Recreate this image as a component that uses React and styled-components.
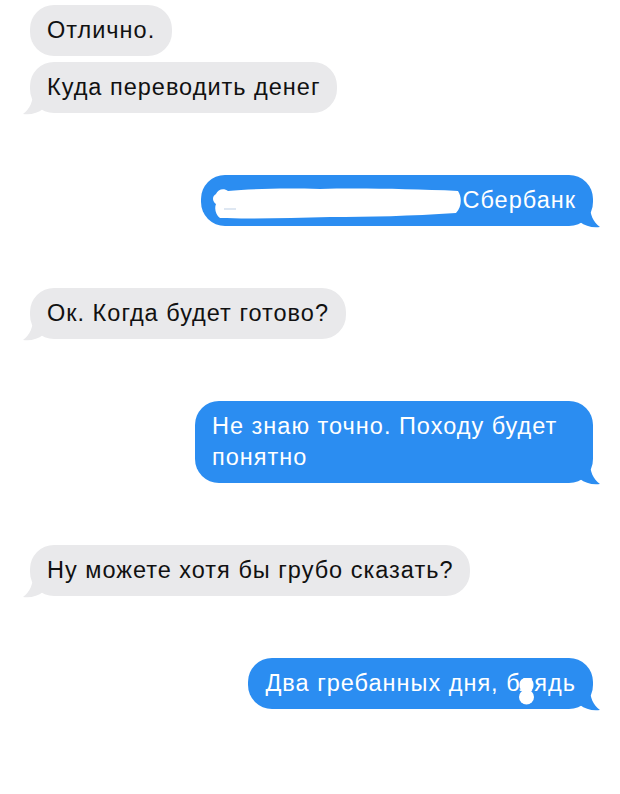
import React from 'react';
import styled, { createGlobalStyle } from 'styled-components';

const GlobalStyle = createGlobalStyle`
  html, body {
    margin: 0;
    padding: 0;
    background: #ffffff;
  }
  body {
    font-family: "Liberation Sans", Arial, sans-serif;
    -webkit-font-smoothing: antialiased;
  }
`;

const Thread = styled.div`
  width: 620px;
  min-height: 794px;
  box-sizing: border-box;
  padding: 5px 27px 0 30px;
  display: flex;
  flex-direction: column;
`;

const Group = styled.div`
  display: flex;
  flex-direction: column;
  align-items: ${p => (p.$mine ? 'flex-end' : 'flex-start')};
  gap: 6px;
  margin-bottom: 62px;
`;

const Bubble = styled.div`
  position: relative;
  box-sizing: border-box;
  max-width: ${p => p.$maxWidth || 400}px;
  padding: 10px 17px;
  border-radius: 24px;
  font-size: 23.5px;
  line-height: 31px;
  letter-spacing: 1px;
  background: ${p => (p.$mine ? '#2b8df1' : '#e9e9eb')};
  color: ${p => (p.$mine ? '#ffffff' : '#111111')};
`;

const Tail = styled.svg`
  position: absolute;
  bottom: -2px;
  width: 20px;
  height: 22px;
  ${p => (p.$mine ? 'right: -7px;' : 'left: -7px; transform: scaleX(-1);')}
`;

const Scribble = styled.svg`
  display: inline-block;
  vertical-align: middle;
  width: 252px;
  height: 38px;
  margin: -5px 0 -5px -8px;
`;

const Censored = styled.span`
  position: relative;
`;

const Blot = styled.svg`
  position: absolute;
  left: -2px;
  top: 7px;
  width: 17px;
  height: 28px;
`;

const BubbleTail = ({ mine }) => (
  <Tail $mine={mine} viewBox="0 0 20 22">
    <path
      d="M0 0 L10 0 C10 8 13 16 20 21 C12 22 5 20 0 16 Z"
      fill={mine ? '#2b8df1' : '#e9e9eb'}
    />
  </Tail>
);

const Message = ({ mine, last, maxWidth, children }) => (
  <Bubble $mine={mine} $maxWidth={maxWidth}>
    {children}
    {last && <BubbleTail mine={mine} />}
  </Bubble>
);

export default function App() {
  return (
    <>
      <GlobalStyle />
      <Thread>
        <Group>
          <Message>Отлично.</Message>
          <Message last>Куда переводить денег</Message>
        </Group>

        <Group $mine>
          <Message mine last maxWidth={420}>
            <Scribble viewBox="0 0 252 38">
              <path
                d="M6 11 C8 6 14 5 18 8 C40 6 70 5 110 6 C150 5 200 6 248 8 C252 14 252 24 246 30 C200 33 160 34 120 34 C80 35 40 36 10 35 C6 32 4 26 6 21 C2 18 2 13 6 11 Z"
                fill="#ffffff"
              />
              <path d="M14 26 L26 26" stroke="#c8d8ea" strokeWidth="1.2" />
            </Scribble>
            Сбербанк
          </Message>
        </Group>

        <Group>
          <Message last>Ок. Когда будет готово?</Message>
        </Group>

        <Group $mine>
          <Message mine last maxWidth={398}>
            Не знаю точно. Походу будет понятно
          </Message>
        </Group>

        <Group>
          <Message last maxWidth={470}>Ну можете хотя бы грубо сказать?</Message>
        </Group>

        <Group $mine>
          <Message mine last maxWidth={400}>
            Два гребанных дня, б
            <Censored>
              л
              <Blot viewBox="0 0 17 28">
                <rect x="1.5" y="1" width="14" height="14" rx="6" fill="#ffffff" />
                <ellipse cx="8.5" cy="20" rx="7.5" ry="7.5" fill="#ffffff" />
              </Blot>
            </Censored>
            ядь
          </Message>
        </Group>
      </Thread>
    </>
  );
}
